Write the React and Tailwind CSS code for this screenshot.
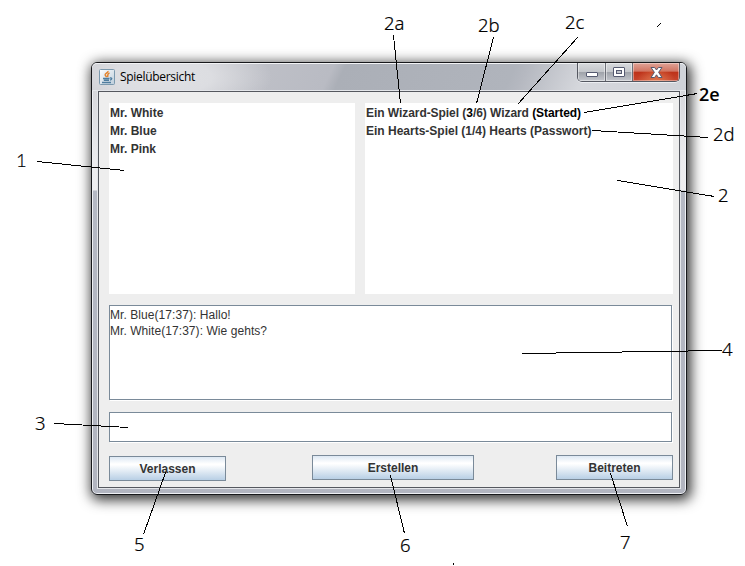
const lines = [
  [393, 35, 400, 103],
  [493, 37, 476, 103],
  [577, 37, 517, 104],
  [584, 112, 697, 93],
  [592, 130, 708, 137],
  [617, 180, 714, 196],
  [521, 353, 555, 353],
  [555, 352, 621, 352],
  [621, 351, 687, 351],
  [687, 350, 721, 350],
  [37, 161, 124, 170],
  [54, 423, 128, 427],
  [165, 472, 143, 534],
  [390, 475, 404, 533],
  [610, 473, 627, 526],
  [656, 27, 660, 23],
  [453, 562, 453, 564],
];

function Label({ className, children }) {
  return (
    <span className={`absolute leading-[20px] whitespace-nowrap text-black ${className}`}>
      {children}
    </span>
  );
}

function JavaIcon() {
  return (
    <svg width="16" height="16" viewBox="0 0 16 16" className="block shrink-0">
      <defs>
        <linearGradient id="cup" x1="0" y1="0" x2="1" y2="1">
          <stop offset="0" stopColor="#fff" />
          <stop offset="1" stopColor="#bccddb" />
        </linearGradient>
      </defs>
      <rect x="0.5" y="0.5" width="15" height="15" rx="1" fill="url(#cup)" stroke="#7b99ae" />
      <path d="M9 2C9.500 4 5.300 4.500 6.200 6.200C6.700 7 7.500 7.300 7.500 8.200M10.500 4C7.500 5 9.500 6.300 8.500 8" fill="none" stroke="#e4822a" strokeWidth="1.500" />
      <path d="M4 9.500H10.500M4.800 11.300H10M11 9C13.500 8.500 13 10.800 11 11M3 13.500H12" fill="none" stroke="#4f7d9f" strokeWidth="1.400" />
    </svg>
  );
}

function Controls() {
  return (
    <div className="flex h-[19px] w-[103px] shrink-0 overflow-hidden rounded-b-[5px] border border-t-0 border-[#555861] shadow-[0_1px_0_#eceef2]">
      <div className="flex w-[28px] items-center justify-center border-r border-[#6c6f77] bg-[linear-gradient(#d8dadd_0%,#c4c7cb_48%,#9fa3aa_52%,#c3c6cc_100%)] shadow-[inset_0_0_0_1px_#ffffff70]">
        <svg width="12" height="5" className="mt-[4px]">
          <rect x="0.5" y="0.5" width="11" height="4" rx="0.500" fill="#fff" stroke="#555a70" />
        </svg>
      </div>
      <div className="flex w-[27px] items-center justify-center border-r border-[#6c6f77] bg-[linear-gradient(#d8dadd_0%,#c4c7cb_48%,#9fa3aa_52%,#c3c6cc_100%)] shadow-[inset_0_0_0_1px_#ffffff70]">
        <svg width="12" height="10">
          <rect x="0.5" y="0.5" width="11" height="9" rx="0.500" fill="#fff" stroke="#555a70" />
          <rect x="3.500" y="3.500" width="5" height="3" fill="#c3c6cc" stroke="#555a70" />
        </svg>
      </div>
      <div className="flex flex-1 items-center justify-center bg-[radial-gradient(ellipse_at_50%_110%,#e07a50_0%,transparent_60%),linear-gradient(#e0a397_0%,#d07462_46%,#bd3118_50%,#c8472f_100%)] shadow-[inset_0_0_0_1px_#ffffff60]">
        <svg width="13" height="11" viewBox="0 0 13 11">
          <path d="M1 0.500H4.600L6.500 3L8.400 0.500H12L8.600 5.300L12 10.500H8.400L6.500 7.800L4.600 10.500H1L4.400 5.300Z" fill="#fff" stroke="#565a70" />
        </svg>
      </div>
    </div>
  );
}

function Button({ className, children }) {
  return (
    <button className={`h-[25px] shrink-0 border border-[#7a8a99] bg-[linear-gradient(#dde8f3_0%,#ffffff_30%,#ffffff_34%,#b8cfe5_100%)] pt-px text-center text-[12px] leading-[14px] font-bold ${className}`}>
      {children}
    </button>
  );
}

export default function App() {
  return (
    <div className="relative h-[566px] w-[745px] overflow-hidden bg-white pt-[62px] pl-[91px] font-['Liberation_Sans',Arial,sans-serif] text-[#333]">
      <div className="flex h-[433px] w-[596px] flex-col rounded-[6px] border border-[#17181b] bg-[linear-gradient(#cfd0d5_0px,#ececef_100px,#eeeef0_127px,#b5b9c4_128px,#b2b5c0_100%)] shadow-[2px_3px_13px_2px_rgba(0,0,0,0.8),inset_0_0_0_1px_#eef0f4]">
        <div className="flex h-[28px] shrink-0 items-start rounded-t-[5px] bg-[radial-gradient(ellipse_110px_40px_at_70px_14px,#e0e1e4_0%,#dcdde1_45%,transparent_100%),linear-gradient(115deg,#c9cacf_0%,#b9bbc3_40%,#abafb7_42%,#b0b4bc_70%,#b5b8c0_72%,#d5d7dc_82%,#cfd2d8_100%)] pr-[6px] pl-[7px] shadow-[inset_0_1px_0_#f2f3f5,inset_0_-1px_0_#e6e8ec]">
          <div className="flex flex-1 items-start gap-[5px] pt-[6px]">
            <JavaIcon />
            <span className="font-['Open_Sans','Noto_Sans',sans-serif] text-[12px] leading-[15px] tracking-[-0.300px] text-black">Spielübersicht</span>
          </div>
          <Controls />
        </div>
        <div className="mx-[6px] flex h-[397px] flex-col border border-[#55585f] bg-[#eee] pt-[11px] pr-[6px] pl-[10px] shadow-[0_0_0_1px_#e4e6ea]">
          <div className="flex gap-[10px] text-[12px] leading-[18px] font-bold">
            <div className="h-[191px] w-[246px] bg-white pt-px pl-px">
              <div>Mr. White</div>
              <div>Mr. Blue</div>
              <div>Mr. Pink</div>
            </div>
            <div className="h-[191px] w-[308px] bg-white pt-px pl-px whitespace-nowrap">
              <div className="tracking-[-0.055px]">Ein Wizard-Spiel (<span className="text-black">3</span>/6) Wizard <span className="text-black">(Started)</span></div>
              <div>Ein Hearts-Spiel (1/4) Hearts (Passwort)</div>
            </div>
          </div>
          <div className="mt-[11px] h-[95px] w-[563px] shrink-0 border border-[#7a8a99] bg-white pt-px text-[12px] leading-[16px] tracking-[0.060px] shadow-[1px_1px_0_#fff]">
            <div>Mr. Blue(17:37): Hallo!</div>
            <div>Mr. White(17:37): Wie gehts?</div>
          </div>
          <div className="mt-[12px] h-[30px] w-[563px] shrink-0 border border-[#7a8a99] bg-white shadow-[1px_1px_0_#fff]" />
          <div className="mt-[13px] flex w-[564px]">
            <Button className="mt-px w-[117px]">Verlassen</Button>
            <Button className="ml-[86px] w-[162px]">Erstellen</Button>
            <Button className="ml-[82px] w-[117px]">Beitreten</Button>
          </div>
        </div>
      </div>

      <svg width="745" height="566" className="pointer-events-none absolute top-0 left-0" shapeRendering="crispEdges">
        {lines.map(([x1, y1, x2, y2], i) => (
          <line key={i} x1={x1 + 0.5} y1={y1 + 0.5} x2={x2 + 0.5} y2={y2 + 0.5} stroke="#000" strokeWidth="1" />
        ))}
      </svg>
      <div className="font-['Noto_Sans','Open_Sans',sans-serif] text-[18.5px] font-light [-webkit-text-stroke:0.2px_#000]">
        <Label className="top-[13px] left-[384px]">2a</Label>
        <Label className="top-[15px] left-[478px]">2b</Label>
        <Label className="top-[12px] left-[565px]">2c</Label>
        <Label className="top-[84px] left-[699px] font-['Open_Sans','Noto_Sans',sans-serif] text-[18px] font-semibold [-webkit-text-stroke:0]">2e</Label>
        <Label className="top-[124px] left-[713px]">2d</Label>
        <Label className="top-[185px] left-[718px]">2</Label>
        <Label className="top-[150px] left-[16px] font-['Lato','Open_Sans',sans-serif]">1</Label>
        <Label className="top-[413px] left-[35px]">3</Label>
        <Label className="top-[339px] left-[722px]">4</Label>
        <Label className="top-[534px] left-[134px]">5</Label>
        <Label className="top-[535px] left-[400px]">6</Label>
        <Label className="top-[532px] left-[620px]">7</Label>
      </div>
    </div>
  );
}
